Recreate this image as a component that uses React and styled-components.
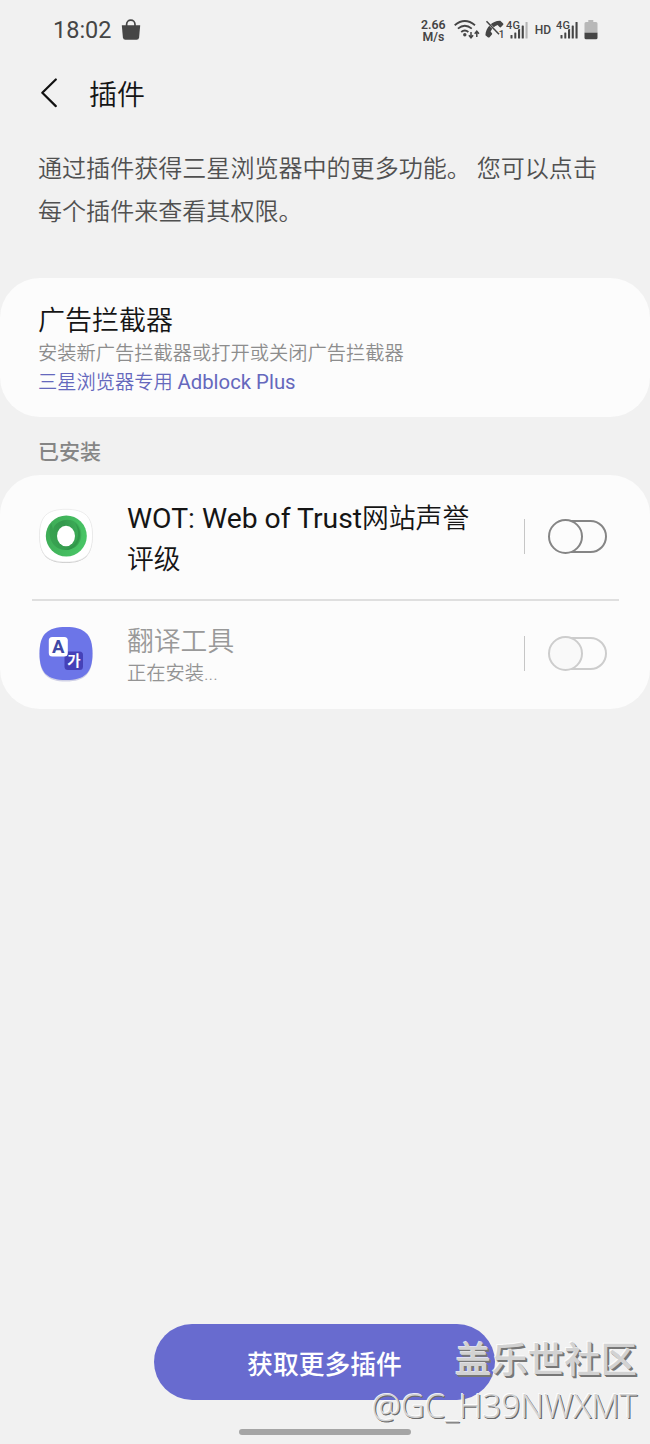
import { useState } from "react";
import styled, { createGlobalStyle } from "styled-components";

const plugins = [
    { id: "wot", latin: "WOT: Web of Trust", name: "网站声誉评级", icon: "wot" },
    { id: "translate", name: "翻译工具", status: "正在安装...", icon: "translate", disabled: true },
];

const BagIcon = () => (
    <svg width="20" height="22" viewBox="0 0 20 22">
        <path d="M5.6 7V5.4a4.2 4.2 0 0 1 8.4 0V7" fill="none" stroke="#464646" strokeWidth="1.7" />
        <path d="M.8 6.2h18.4l-1.1 12.2q-.3 2.3-2.5 2.3H4.4q-2.2 0-2.5-2.3z" fill="#464646" />
    </svg>
);

const WifiIcon = () => (
    <svg width="26" height="20" viewBox="0 0 26 20">
        <g fill="none" stroke="#454545" strokeWidth="1.8">
            <path d="M.7 5.2Q10.8-3.2 21 5.2" />
            <path d="M3.9 8.6q6.9-5.8 13.9 0" />
            <path d="M7.2 12q3.6-3 7.2 0" />
        </g>
        <circle cx="10.8" cy="14.8" r="1.7" fill="#454545" />
        <path d="M17 12v5M14.9 15.300l2.100 2.600 2.100-2.600M22.8 17v-5M20.700 13.700l2.100-2.600 2.100 2.600" fill="none" stroke="#454545" strokeWidth="1.5" />
    </svg>
);

const CallIcon = () => (
    <svg width="20" height="20" viewBox="0 0 20 20">
        <path d="M.4 15.300C.7 7.500 7.500.500 15.300.800L18.200 3.400Q18.800 4.200 18 5L15.800 7.200Q15.200 7.700 14.500 7L12.600 5Q8 6.800 5.600 11.500L7 13.300Q7.500 14 6.900 14.600L4.600 17.200Q3.900 17.900 3.100 17.400Z" fill="#454545" />
        <path d="M1.500 1.300l12.500 13" stroke="#f1f1f1" strokeWidth="2.200" />
        <path d="M1.500 1.300l12.500 13" stroke="#454545" strokeWidth="1.500" />
        <text x="13.800" y="18.300" fontFamily="Roboto, sans-serif" fontSize="10" fontWeight="500" fill="#454545">1</text>
    </svg>
);

const SignalIcon = ({ weak }) => (
    <svg width="23" height="22" viewBox="0 0 23 22">
        <g fill="#454545">
            <rect x="4.500" y="16" width="2" height="3.500" rx=".6" />
            <rect x="8.300" y="13.500" width="2" height="6" rx=".6" />
            <rect x="12" y="10" width="2.100" height="9.500" rx=".6" />
            <rect x="15.700" y="6.500" width="2.100" height="13" rx=".6" />
            <rect x="19.500" y="3" width="2.100" height="16.500" rx=".6" opacity={weak ? 0.35 : 1} />
        </g>
        <text x="0" y="9.800" textLength="14" fontFamily="Roboto, sans-serif" fontSize="11" fontWeight="500" fill="#454545" stroke="#f1f1f1" strokeWidth="1.200" paintOrder="stroke">4G</text>
    </svg>
);

const BatteryIcon = () => (
    <svg width="14" height="20" viewBox="0 0 14 20">
        <path d="M4.300 0h5v2h2.700q1.500 0 1.500 1.500V13H.5V3.500Q.5 2 2 2h2.300z" fill="#b8b8b8" />
        <path d="M.5 12.800h13v5q0 1.500-1.500 1.500H2q-1.500 0-1.500-1.500z" fill="#454545" />
    </svg>
);

const BackIcon = () => (
    <svg width="18" height="30" viewBox="0 0 18 30">
        <path d="M15.800 1.500L2.300 14.800l13.500 13.300" fill="none" stroke="#111" strokeWidth="2.200" strokeLinecap="round" strokeLinejoin="round" />
    </svg>
);

const WotIcon = () => (
    <svg width="58" height="58" viewBox="0 0 58 58">
        <defs>
            <linearGradient id="ring" x1="0" y1="0" x2="1" y2=".3">
                <stop offset="0" stopColor="#3da955" />
                <stop offset="1" stopColor="#48c465" />
            </linearGradient>
            <linearGradient id="swirl" x1="0" y1=".3" x2="1" y2="0">
                <stop offset="0" stopColor="#359b4d" />
                <stop offset=".45" stopColor="#2f8f48" />
                <stop offset="1" stopColor="#3eb158" />
            </linearGradient>
        </defs>
        <path d="M29 2.800C48 2.800 55.500 10 55.500 29S48 56 29 56 2.500 48 2.500 29 10 2.800 29 2.800z" fill="#c9c9c9" />
        <path d="M29 2.300C48 2.300 55.500 9.500 55.500 28.500S48 55 29 55 2.500 47.500 2.500 28.500 10 2.300 29 2.300z" fill="#fff" stroke="#e6e6e6" strokeWidth=".7" />
        <circle cx="29.300" cy="29" r="20.500" fill="url(#ring)" />
        <path d="M14 16C10 28 14 42 28 43c11 0 18-8 16-19C42 14 32 10 22 15c-4 2-6 5-6 9 0-3-1-5-2-8z" fill="url(#swirl)" opacity=".75" />
        <path d="M38 16c6 5 7 14 2 21-3 4-7 6-12 6 9-3 13-9 13-16 0-4-1-8-3-11z" fill="#2f9549" opacity=".8" />
        <ellipse cx="29" cy="29" rx="9" ry="10.300" fill="#fff" />
    </svg>
);

const TranslateIcon = () => (
    <svg width="58" height="58" viewBox="0 0 58 58">
        <path d="M29 3C48 3 55.500 10.500 55.500 29.500S48 56.500 29 56.500 2.500 49 2.500 29.500 10 3 29 3z" fill="#cfd0e6" />
        <path d="M29 2C48 2 55.500 9.500 55.500 28.500S48 55 29 55 2.500 47.500 2.500 28.500 10 2 29 2z" fill="#6c75e8" />
        <rect x="27.500" y="26.500" width="18.500" height="18.500" rx="3.500" fill="#4541b8" />
        <rect x="11.800" y="12" width="19" height="19.500" rx="3.500" fill="#fff" />
        <text x="21.300" y="28.300" textAnchor="middle" fontFamily="Roboto, sans-serif" fontSize="18.500" fontWeight="700" fill="#4049a6">A</text>
        <text x="37" y="41" textAnchor="middle" fontFamily="'Noto Sans CJK KR', sans-serif" fontSize="14.500" fontWeight="700" fill="#fff">가</text>
    </svg>
);

const icons = { wot: WotIcon, translate: TranslateIcon };

const Plugin = ({ plugin }) => {
    const [enabled, setEnabled] = useState(false);
    const Icon = icons[plugin.icon];

    return (
        <Row>
            <Icon />
            <RowText>
                <RowName $disabled={plugin.disabled}>
                    {plugin.latin && <Latin>{plugin.latin}</Latin>}
                    {plugin.name}
                </RowName>
                {plugin.status && <RowStatus>{plugin.status}</RowStatus>}
            </RowText>
            <Separator />
            <Switch
                role="switch"
                aria-checked={enabled}
                disabled={plugin.disabled}
                $on={enabled}
                onClick={() => setEnabled(!enabled)}
            >
                <Thumb $disabled={plugin.disabled} />
            </Switch>
        </Row>
    );
};

const App = () => (
    <>
        <GlobalStyle />
        <Screen>
            <StatusBar>
                <Clock>18:02</Clock>
                <BagIcon />
                <StatusIcons>
                    <Speed>
                        <span>2.66</span>
                        <span>M/s</span>
                    </Speed>
                    <WifiIcon />
                    <CallIcon />
                    <SignalIcon weak />
                    <Hd>HD</Hd>
                    <SignalIcon />
                    <BatteryIcon />
                </StatusIcons>
            </StatusBar>
            <Header>
                <BackButton><BackIcon /></BackButton>
                <Title>插件</Title>
            </Header>
            <Intro>通过插件获得三星浏览器中的更多功能。 您可以点击每个插件来查看其权限。</Intro>
            <BlockerCard>
                <CardTitle>广告拦截器</CardTitle>
                <CardNote>安装新广告拦截器或打开或关闭广告拦截器</CardNote>
                <CardLink>三星浏览器专用 <Latin>Adblock Plus</Latin></CardLink>
            </BlockerCard>
            <SectionLabel>已安装</SectionLabel>
            <PluginCard>
                {plugins.map((plugin) => <Plugin key={plugin.id} plugin={plugin} />)}
            </PluginCard>
            <Footer>
                <MoreButton>获取更多插件</MoreButton>
                <HomeHandle />
            </Footer>
            <Watermark>
                <Community>盖乐世社区</Community>
                <Author>@GC_H39NWXMT</Author>
            </Watermark>
        </Screen>
    </>
);

const GlobalStyle = createGlobalStyle`
* {
    box-sizing: border-box;
}
body {
    margin: 0;
    background: #f1f1f1;
    font-family: Roboto, "Noto Sans CJK SC", sans-serif;
}
svg {
    display: block;
    flex-shrink: 0;
}
button {
    padding: 0;
    border: none;
    background: none;
    font-family: inherit;
}
h1, h2, p {
    margin: 0;
    font-weight: 350;
}
`;

const Screen = styled.div`
position: relative;
display: flex;
flex-direction: column;
width: 650px;
height: 1444px;
overflow: hidden;
background: #f1f1f1;
`;

const StatusBar = styled.div`
display: flex;
align-items: center;
height: 60px;
padding: 0 52px 0 53px;
color: #454545;
`;

const Clock = styled.span`
margin-right: 9px;
font-size: 23.500px;
line-height: 62px;
`;

const StatusIcons = styled.div`
display: flex;
align-items: center;
margin-left: auto;
gap: 5px;
svg:nth-of-type(2) {
    margin-right: -4px;
}
`;

const Speed = styled.span`
display: flex;
flex-direction: column;
align-items: center;
margin-right: 3px;
padding-top: 1px;
font-size: 12.300px;
font-weight: 600;
line-height: 12px;
`;

const Hd = styled.span`
margin-left: 1px;
font-size: 12px;
font-weight: 500;
`;

const Latin = styled.span`
font-size: 1.057em;
font-weight: 400;
line-height: 1;
`;

const Header = styled.header`
display: flex;
align-items: center;
height: 66px;
padding-left: 40px;
`;

const BackButton = styled.button`
width: 49px;
`;

const Title = styled.h1`
padding-top: 5px;
font-size: 28px;
line-height: 40px;
color: #151515;
`;

const Intro = styled.p`
height: 152px;
padding: 21.500px 38px 0;
font-size: 24.060px;
line-height: 43.500px;
color: #505050;
`;

const Card = styled.section`
flex-shrink: 0;
border-radius: 40px;
background: #fcfcfc;
`;

const BlockerCard = styled(Card)`
height: 139px;
padding: 26px 38px 0;
`;

const CardTitle = styled.h2`
font-size: 27px;
line-height: 35px;
color: #151515;
`;

const CardNote = styled.p`
font-size: 19.250px;
line-height: 29px;
color: #8d8d8d;
`;

const CardLink = styled(CardNote)`
color: #6568bd;
`;

const SectionLabel = styled.h2`
height: 58px;
padding-left: 38px;
font-size: 21px;
font-weight: 500;
line-height: 71px;
color: #858585;
`;

const PluginCard = styled(Card)`
height: 234px;
`;

const Row = styled.div`
display: flex;
align-items: center;
height: 105px;
margin: 0 31px 0 32px;
padding: 0 11px 0 5px;
&:first-child {
    height: 126px;
    padding-bottom: 2px;
    border-bottom: 2px solid #dfdfdf;
}
`;

const RowText = styled.div`
width: 350px;
margin-left: 32px;
padding-top: 7px;
`;

const RowName = styled.h2`
font-size: 26.800px;
line-height: ${({ $disabled }) => ($disabled ? "34px" : "41px")};
color: ${({ $disabled }) => ($disabled ? "#999" : "#151515")};
`;

const RowStatus = styled.p`
font-size: 19.250px;
line-height: 30px;
color: #949494;
`;

const Separator = styled.span`
width: 1.500px;
height: 35px;
margin-left: auto;
background: #c6c6c6;
`;

const Switch = styled.button`
position: relative;
display: flex;
align-items: center;
justify-content: ${({ $on }) => ($on ? "flex-end" : "flex-start")};
width: 60px;
height: 35px;
margin-left: 23px;
color: ${({ disabled }) => (disabled ? "#cdcdcd" : "#858585")};
&::before {
    content: "";
    position: absolute;
    inset: 1px 1px 1px 2px;
    border: 2px solid currentColor;
    border-radius: 17px;
}
`;

const Thumb = styled.span`
position: relative;
width: 35px;
height: 35px;
border: 2px solid currentColor;
border-radius: 50%;
background: ${({ $disabled }) => ($disabled ? "#f9f9f9" : "#fcfcfc")};
`;

const Footer = styled.footer`
display: flex;
flex-direction: column;
align-items: center;
margin-top: auto;
height: 120px;
`;

const MoreButton = styled.button`
width: 341px;
height: 76px;
margin-right: 1px;
border-radius: 38px;
background: #686bcf;
color: #fff;
font-size: 25.800px;
font-weight: 500;
`;

const HomeHandle = styled.span`
width: 172px;
height: 6px;
margin-top: 29px;
border-radius: 3px;
background: #a5a5a5;
`;

const Watermark = styled.div`
position: absolute;
right: 13px;
bottom: 15px;
display: flex;
flex-direction: column;
align-items: flex-end;
font-family: "Noto Sans CJK SC", sans-serif;
color: #d2d2d2;
pointer-events: none;
`;

const Community = styled.span`
margin-bottom: 3px;
font-size: 36.400px;
font-weight: 500;
line-height: 45px;
text-shadow: -1px -1px 0 rgba(255, 255, 255, 0.8), 1px 1px 0 #777, 2px 2px 0 #777;
`;

const Author = styled.span`
font-family: "Open Sans", "Noto Sans", sans-serif;
font-size: 33px;
font-weight: 300;
line-height: 46px;
text-shadow: -1px -1px 0 rgba(255, 255, 255, 0.9), 1px 1px 0 #6c6c6c, 1px 1px 0 #6c6c6c;
`;

export default App;
